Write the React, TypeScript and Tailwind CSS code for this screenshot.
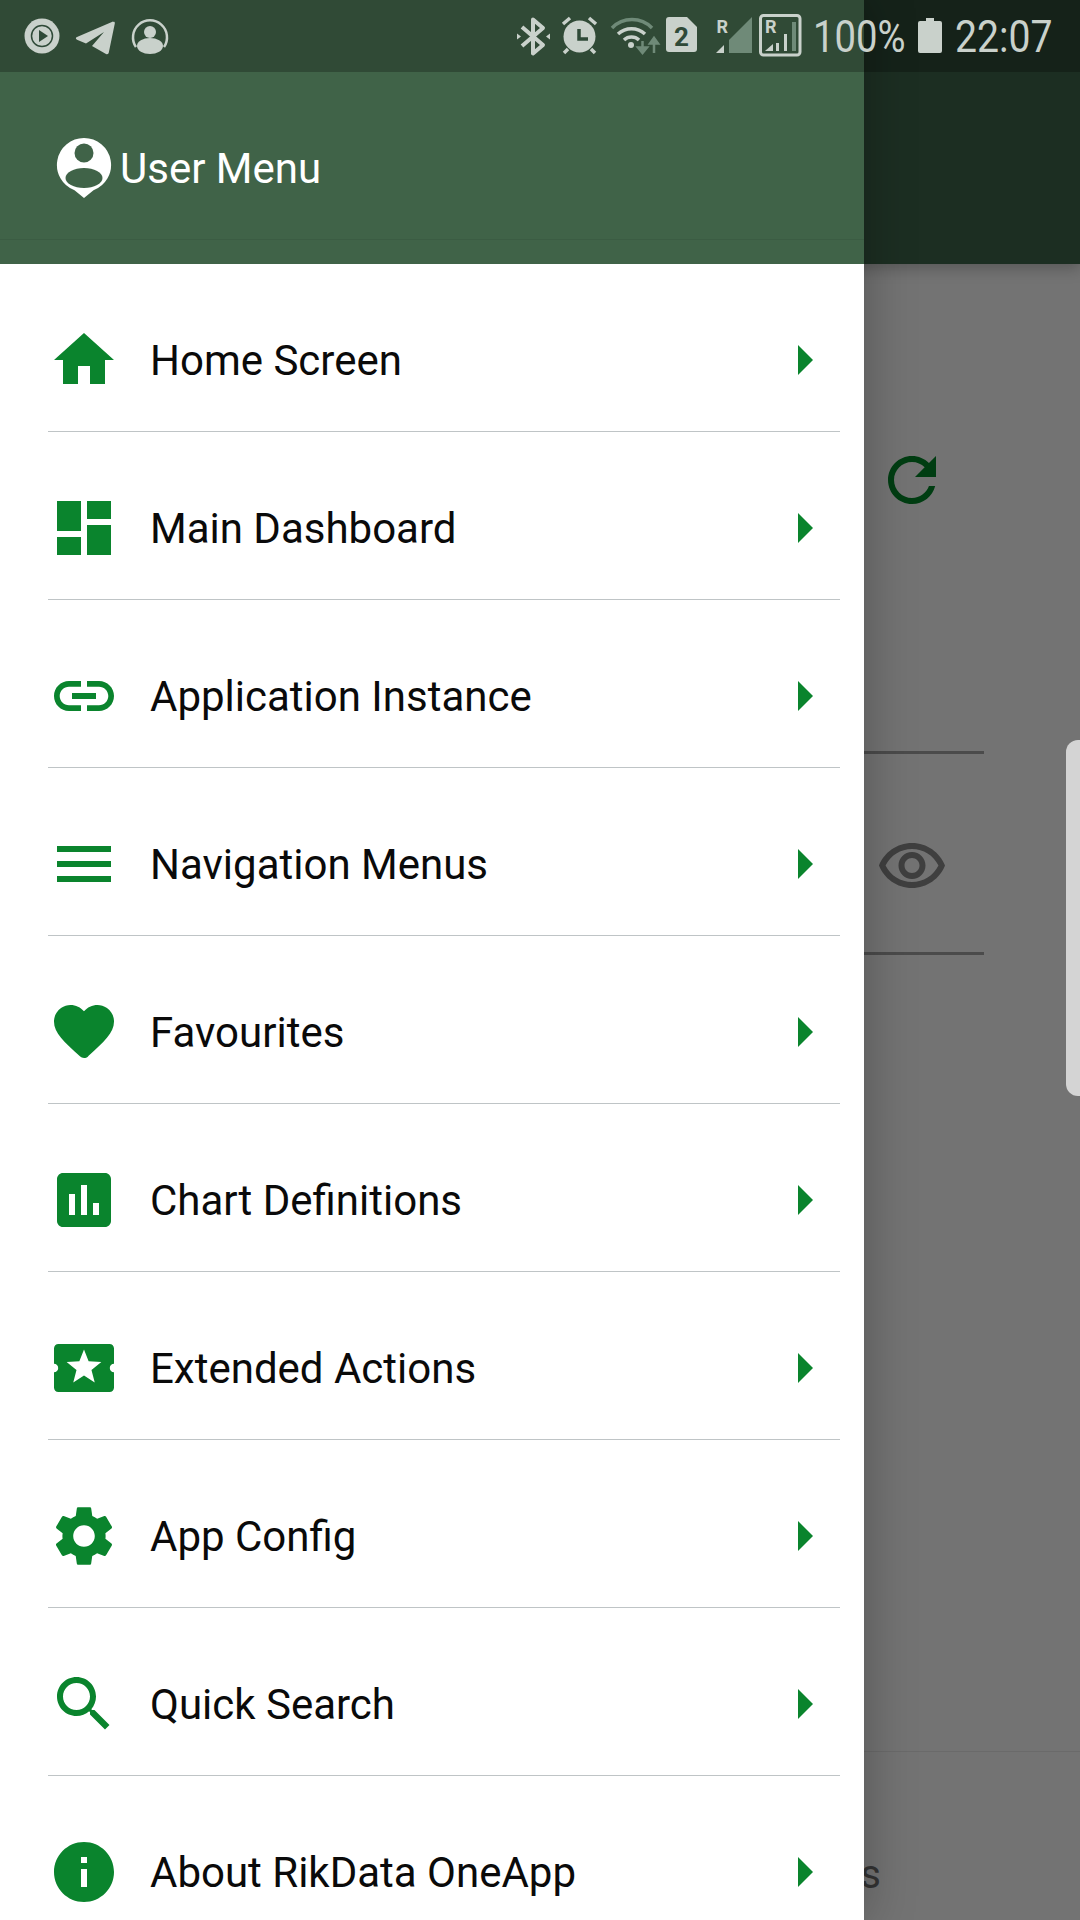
const GREEN = '#0a842d';
const ICON = '#c9d1cb';
const DIM = '#6f8a78';
const BAR = '#2f4a38';

const menuItems = [
  {
    label: 'Home Screen',
    path: 'M10 20v-6h4v6h5v-8h3L12 3 2 12h3v8z',
  },
  {
    label: 'Main Dashboard',
    path: 'M3 13h8V3H3v10zm0 8h8v-6H3v6zm10 0h8V11h-8v10zm0-18v6h8V3h-8z',
  },
  {
    label: 'Application Instance',
    path: 'M3.9 12c0-1.71 1.39-3.1 3.1-3.1h4V7H7c-2.76 0-5 2.24-5 5s2.24 5 5 5h4v-1.9H7c-1.71 0-3.1-1.39-3.1-3.1zM8 13h8v-2H8v2zm9-6h-4v1.9h4c1.71 0 3.1 1.39 3.1 3.1s-1.39 3.1-3.1 3.1h-4V17h4c2.76 0 5-2.24 5-5s-2.24-5-5-5z',
  },
  {
    label: 'Navigation Menus',
    path: 'M3 18h18v-2H3v2zm0-5h18v-2H3v2zm0-7v2h18V6H3z',
  },
  {
    label: 'Favourites',
    path: 'M13.35 20.13c-.76.69-1.93.69-2.69-.01l-.11-.1C5.3 15.27 1.87 12.16 2 8.28c.06-1.7.93-3.33 2.34-4.29 2.64-1.8 5.9-.96 7.66 1.1 1.76-2.06 5.02-2.91 7.66-1.1 1.41.96 2.28 2.59 2.34 4.29.14 3.88-3.3 6.99-8.55 11.76l-.1.09z',
  },
  {
    label: 'Chart Definitions',
    path: 'M19 3H5c-1.1 0-2 .9-2 2v14c0 1.1.9 2 2 2h14c1.1 0 2-.9 2-2V5c0-1.1-.9-2-2-2zM9 17H7v-7h2v7zm4 0h-2V7h2v10zm4 0h-2v-4h2v4z',
  },
  {
    label: 'Extended Actions',
    path: 'M22 10.6V5.5C22 4.6 21.400 4 20.500 4h-17C2.600 4 2 4.600 2 5.500v5.100c.8 0 1.400.6 1.400 1.400S2.800 13.400 2 13.400v5.100c0 .9.6 1.500 1.500 1.500h17c.9 0 1.500-.6 1.500-1.500v-5.100c-.8 0-1.400-.6-1.400-1.400s.6-1.400 1.400-1.400zm-6.420 6.200L12 14.500l-3.580 2.300 1.080-4.120-3.290-2.690 4.240-.25L12 5.800l1.540 3.950 4.240.25-3.290 2.690 1.090 4.110z',
  },
  {
    label: 'App Config',
    path: 'M19.14 12.94c.04-.3.06-.61.06-.94 0-.32-.02-.64-.07-.94l2.03-1.58c.18-.14.23-.41.12-.61l-1.92-3.32c-.12-.22-.37-.29-.59-.22l-2.39.96c-.5-.38-1.03-.7-1.62-.94l-.36-2.54c-.04-.24-.24-.41-.48-.41h-3.84c-.24 0-.43.17-.47.41l-.36 2.54c-.59.24-1.13.57-1.62.94l-2.39-.96c-.22-.08-.47 0-.59.22L2.740 8.870c-.12.21-.08.47.12.61l2.030 1.580c-.05.3-.09.63-.09.94s.02.64.07.94l-2.030 1.580c-.18.14-.23.41-.12.61l1.920 3.320c.12.22.37.29.59.22l2.390-.96c.5.38 1.030.7 1.620.94l.36 2.540c.05.24.24.41.48.41h3.840c.24 0 .44-.17.47-.41l.36-2.540c.59-.24 1.130-.56 1.620-.94l2.390.96c.22.08.47 0 .59-.22l1.920-3.320c.12-.22.07-.47-.12-.61l-2.010-1.580zM12 15.600c-1.980 0-3.600-1.620-3.600-3.600s1.620-3.600 3.600-3.600 3.600 1.620 3.600 3.600-1.620 3.600-3.600 3.600z',
  },
  {
    label: 'Quick Search',
    path: 'M15.500 14h-.79l-.28-.27C15.410 12.590 16 11.110 16 9.500 16 5.910 13.090 3 9.500 3S3 5.910 3 9.500 5.910 16 9.500 16c1.610 0 3.090-.59 4.230-1.570l.27.28v.79l5 4.990L20.490 19l-4.990-5zm-6 0C7.010 14 5 11.990 5 9.500S7.010 5 9.500 5 14 7.010 14 9.500 11.990 14 9.500 14z',
  },
  {
    label: 'About RikData OneApp',
    path: 'M12 2C6.480 2 2 6.480 2 12s4.480 10 10 10 10-4.480 10-10S17.520 2 12 2zm1 15h-2v-6h2v6zm0-8h-2V7h2v2z',
  },
];

function MaterialIcon({ path, className }: { path: string; className: string }) {
  return (
    <svg viewBox="0 0 24 24" className={className} fill="currentColor">
      <path d={path} />
    </svg>
  );
}

function MenuRow({ label, path }: { label: string; path: string }) {
  return (
    <div className="ml-12 mr-6 flex h-[168px] items-center border-b border-[#bfc4c6] pt-6">
      <MaterialIcon path={path} className="h-[72px] w-[72px] shrink-0 text-[#0a842d]" />
      <span className="ml-[30px] mt-[2px] flex-1 text-[42px] leading-none text-[#0a0a0a]">{label}</span>
      <MaterialIcon path="M10 17l5-5-5-5v10z" className="h-[72px] w-[72px] shrink-0 text-[#0a842d]" />
    </div>
  );
}

function StatusBar() {
  return (
    <div className="absolute inset-x-0 top-0 z-20 flex h-[72px] items-center justify-between bg-black/25 pl-[22px] pr-[28px] text-[#c9d1cb]">
      <div className="flex items-center">
        <svg viewBox="22 10 40 52" className="h-[52px] w-[40px]">
          <circle cx="42" cy="36" r="17.500" fill={ICON} />
          <circle cx="42" cy="36" r="10.500" fill="none" stroke={BAR} strokeWidth="1.500" />
          <path d="M39 30l9 6-9 6z" fill={BAR} />
        </svg>
        <svg viewBox="72 10 46 52" className="ml-[10px] h-[52px] w-[46px]">
          <path
            d="M113 21.500 77 37c-1.500.7-1.500 2 0 2.700l9 3.800 18-11.500-12 14 14 8c1.500.6 2.500 0 2.800-1.500l6-29c.3-1.500-.7-2-1.800-1.500z"
            fill={ICON}
          />
        </svg>
        <svg viewBox="130 10 40 52" className="ml-[12px] h-[52px] w-[40px]">
          <path d="M136 47a17 17 0 1 1 28 0" fill="none" stroke={ICON} strokeWidth="2.500" />
          <circle cx="150" cy="32" r="6" fill={ICON} />
          <ellipse cx="150" cy="46" rx="13" ry="8" fill={ICON} />
        </svg>
      </div>
      <div className="flex items-center">
        <svg viewBox="515 10 37 52" className="h-[52px] w-[37px]">
          <path
            d="M522 27l21 18-10 8.500V19.500l10 8.500-21 18"
            fill="none"
            stroke={ICON}
            strokeWidth="4"
            strokeLinejoin="round"
          />
          <path d="M517 33.500l4 3-4 3zM550 33.500l-4 3 4 3z" fill={ICON} />
        </svg>
        <svg viewBox="559 10 41 52" className="ml-[7px] h-[52px] w-[41px]">
          <circle cx="579.500" cy="36.500" r="16" fill={ICON} />
          <path d="M563 24l7-6M596 24l-7-6M568 49l-4 4M591 49l4 4" stroke={ICON} strokeWidth="3.500" fill="none" />
          <path d="M579 29v10h9" stroke={BAR} strokeWidth="3.500" fill="none" />
        </svg>
        <svg viewBox="609 10 52 52" className="ml-[9px] h-[52px] w-[52px]">
          <path d="M612 28a28 28 0 0 1 40 0" stroke={DIM} strokeWidth="3.500" fill="none" />
          <path d="M618 34a20 20 0 0 1 27 0" stroke={ICON} strokeWidth="3.500" fill="none" />
          <path d="M624 40a11 11 0 0 1 15 0" stroke={ICON} strokeWidth="3.500" fill="none" />
          <circle cx="631" cy="45" r="3" fill={ICON} />
          <path d="M642.500 41v7.500M638 47.500l4.500 5.500 4.500-5.500z" stroke={DIM} strokeWidth="2.500" fill={DIM} />
          <path d="M654 53v-10M650 43.500l4-5.500 4 5.500z" stroke={DIM} strokeWidth="2.500" fill={DIM} />
        </svg>
        <svg viewBox="664 10 35 52" className="ml-[3px] h-[52px] w-[35px]">
          <path d="M669 17h18l10 10v22a3 3 0 0 1-3 3h-25a3 3 0 0 1-3-3V20a3 3 0 0 1 3-3z" fill={ICON} />
          <text x="681.500" y="46" textAnchor="middle" fontSize="26" fontWeight="700" fill={BAR}>
            2
          </text>
        </svg>
        <svg viewBox="714 10 40 52" className="ml-[15px] h-[52px] w-[40px]">
          <text x="716.500" y="33" fontSize="18" fontWeight="700" fill={ICON}>
            R
          </text>
          <path d="M716 53l8-8v8z" fill={ICON} />
          <path d="M729 53V40l23-23v36z" fill={DIM} />
        </svg>
        <svg viewBox="757 10 46 52" className="ml-[3px] h-[52px] w-[46px]">
          <rect x="760.500" y="15.500" width="39.500" height="39.500" rx="3" fill="none" stroke={ICON} strokeWidth="3" />
          <text x="765" y="33" fontSize="18" fontWeight="700" fill={ICON}>
            R
          </text>
          <path d="M765 51l8-7v7z" fill={ICON} />
          <path d="M776 51v-8h3v8zM784 51V34h3v17z" fill={ICON} />
          <path d="M792 51V22h4v29z" fill={DIM} />
        </svg>
        <span className="ml-[10px] w-[92px] origin-left scale-x-[0.85] whitespace-nowrap text-[45px] leading-none">
          100%
        </span>
        <svg viewBox="918 10 24 52" className="ml-[13px] h-[52px] w-[24px]">
          <path d="M926 18h8v3h6a2 2 0 0 1 2 2v28a2 2 0 0 1-2 2h-20a2 2 0 0 1-2-2V23a2 2 0 0 1 2-2h6z" fill={ICON} />
        </svg>
        <span className="ml-[13px] w-[97px] origin-left scale-x-[0.87] whitespace-nowrap text-[45px] leading-none">
          22:07
        </span>
      </div>
    </div>
  );
}

function Drawer() {
  return (
    <aside className="absolute inset-y-0 left-0 z-10 w-[864px] overflow-hidden bg-white shadow-[0_0_48px_rgba(0,0,0,0.28)]">
      <header className="h-[264px] bg-[#406348] pt-[72px]">
        <div className="flex h-[168px] items-start border-b border-[#3b5c43] pl-[54px] pt-[60px]">
          <svg viewBox="54 132 60 72" className="h-[72px] w-[60px] shrink-0">
            <path
              d="M84 138a27 27 0 0 1 9.500 52.300L84 198l-9.500-7.700A27 27 0 0 1 84 138z"
              fill="#fff"
            />
            <circle cx="84" cy="153" r="9.500" fill="#406348" />
            <ellipse cx="84" cy="178" rx="18.500" ry="10" fill="#406348" />
          </svg>
          <span className="ml-[6px] mt-[16px] text-[42px] leading-[42px] text-white">User Menu</span>
        </div>
      </header>
      <nav>
        {menuItems.map((item) => (
          <MenuRow key={item.label} label={item.label} path={item.path} />
        ))}
      </nav>
    </aside>
  );
}

function Backdrop() {
  return (
    <div className="flex h-[1920px] flex-col bg-[#737373]">
      <div className="h-[264px] shrink-0 bg-[#1c2e22] shadow-[0_4px_14px_rgba(0,0,0,0.25)]" />
      <div className="w-[984px] pl-[876px] pt-[180px]">
        <MaterialIcon
          path="M17.650 6.350C16.200 4.900 14.210 4 12 4c-4.420 0-7.990 3.580-7.990 8s3.570 8 7.990 8c3.730 0 6.840-2.550 7.730-6h-2.080c-.82 2.330-3.040 4-5.650 4-3.310 0-6-2.690-6-6s2.690-6 6-6c1.660 0 3.140.69 4.220 1.780L13 11h7V4l-2.350 2.350z"
          className="h-[72px] w-[72px] text-[#003d12]"
        />
      </div>
      <div className="mt-[235px] h-[204px] w-[984px] border-y-[3px] border-[#4b4b4b] pl-[876px] pt-[77px]">
        <MaterialIcon
          path="M12 6c3.790 0 7.170 2.130 8.820 5.500C19.170 14.870 15.790 17 12 17s-7.170-2.130-8.820-5.500C4.830 8.130 8.210 6 12 6m0-2C7 4 2.730 7.110 1 11.500 2.730 15.890 7 19 12 19s9.270-3.110 11-7.500C21.270 7.110 17 4 12 4zm0 5c1.380 0 2.500 1.120 2.500 2.500S13.380 14 12 14s-2.500-1.120-2.500-2.500S10.620 9 12 9m0-2c-2.480 0-4.500 2.020-4.500 4.500S9.520 16 12 16s4.500-2.020 4.500-4.500S14.480 7 12 7z"
          className="h-[72px] w-[72px] text-[#3f3f3f]"
        />
      </div>
      <div className="mt-[796px] flex-1 border-t border-[#6a6a6a] pt-[103px]">
        <div className="w-[881px] text-right text-[40px] leading-none text-[#333]">Actions</div>
      </div>
      <div className="absolute right-0 top-[740px] h-[356px] w-[14px] rounded-l-[12px] bg-[#d4d4d4]" />
    </div>
  );
}

export default function App() {
  return (
    <div className="relative h-[1920px] w-[1080px] overflow-hidden font-['Roboto',sans-serif]">
      <Backdrop />
      <Drawer />
      <StatusBar />
    </div>
  );
}
